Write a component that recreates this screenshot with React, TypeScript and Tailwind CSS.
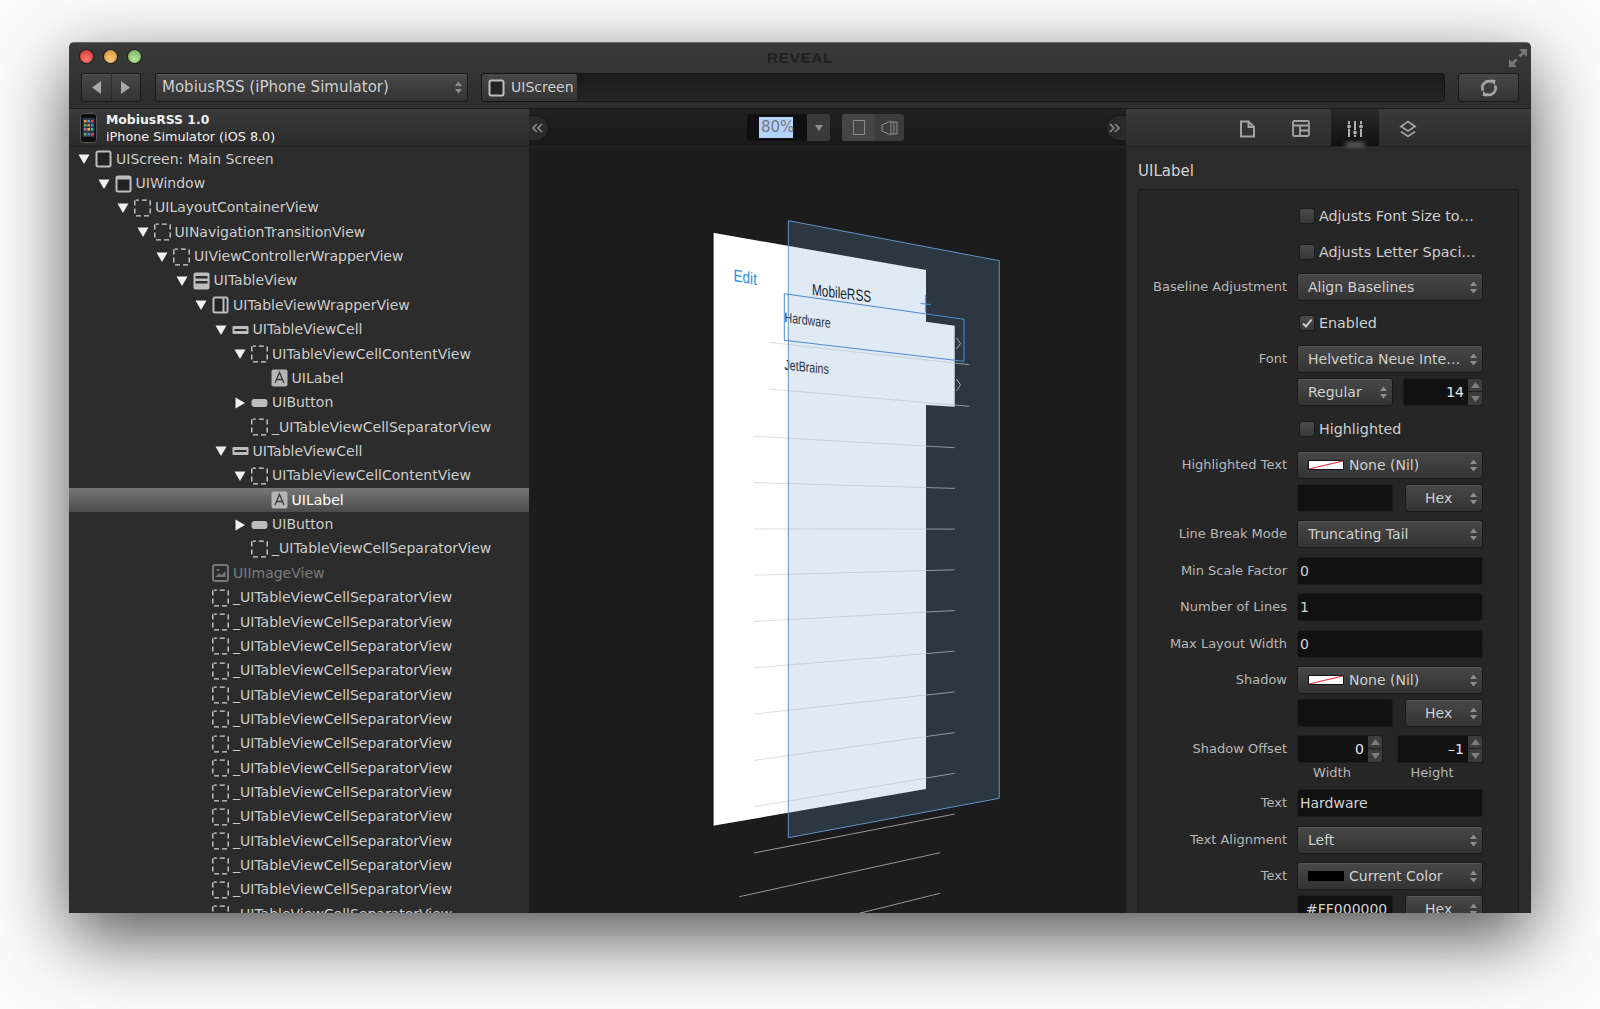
import type { ReactNode } from "react";

const FONT = "font-['DejaVu_Sans','Liberation_Sans',sans-serif]";

type IconKind = "screen" | "window" | "dashed" | "table" | "wrapper" | "cell" | "label" | "button" | "image";

type TreeRow = {
  name: string;
  level: number;
  icon: IconKind;
  arrow?: "open" | "closed";
  selected?: boolean;
  dim?: boolean;
};

const separators: TreeRow[] = Array.from({ length: 14 }, () => ({
  name: "_UITableViewCellSeparatorView",
  level: 6,
  icon: "dashed",
}));

const tree: TreeRow[] = [
  { name: "UIScreen: Main Screen", level: 0, icon: "screen", arrow: "open" },
  { name: "UIWindow", level: 1, icon: "window", arrow: "open" },
  { name: "UILayoutContainerView", level: 2, icon: "dashed", arrow: "open" },
  { name: "UINavigationTransitionView", level: 3, icon: "dashed", arrow: "open" },
  { name: "UIViewControllerWrapperView", level: 4, icon: "dashed", arrow: "open" },
  { name: "UITableView", level: 5, icon: "table", arrow: "open" },
  { name: "UITableViewWrapperView", level: 6, icon: "wrapper", arrow: "open" },
  { name: "UITableViewCell", level: 7, icon: "cell", arrow: "open" },
  { name: "UITableViewCellContentView", level: 8, icon: "dashed", arrow: "open" },
  { name: "UILabel", level: 9, icon: "label" },
  { name: "UIButton", level: 8, icon: "button", arrow: "closed" },
  { name: "_UITableViewCellSeparatorView", level: 8, icon: "dashed" },
  { name: "UITableViewCell", level: 7, icon: "cell", arrow: "open" },
  { name: "UITableViewCellContentView", level: 8, icon: "dashed", arrow: "open" },
  { name: "UILabel", level: 9, icon: "label", selected: true },
  { name: "UIButton", level: 8, icon: "button", arrow: "closed" },
  { name: "_UITableViewCellSeparatorView", level: 8, icon: "dashed" },
  { name: "UIImageView", level: 6, icon: "image", dim: true },
  ...separators,
];

function TreeIcon({ kind, dim }: { kind: IconKind; dim?: boolean }) {
  const c = dim ? "#777" : "#bdbdbd";
  return (
    <svg width="17" height="18" viewBox="0 0 17 18" className="shrink-0">
      {kind === "screen" && <rect x="1.5" y="1.5" width="14" height="15" rx="1.5" fill="#222" stroke={c} strokeWidth="2" />}
      {kind === "window" && (
        <>
          <rect x="1.5" y="1.5" width="14" height="15" rx="1.5" fill="#222" stroke={c} strokeWidth="2" />
          <rect x="1.5" y="1.5" width="14" height="3" fill={c} />
        </>
      )}
      {kind === "dashed" && <rect x="0.8" y="1.2" width="15.4" height="15.6" rx="1" fill="none" stroke="#d6d6d6" strokeWidth="1.3" strokeDasharray="5 3" strokeDashoffset="2" />}
      {kind === "table" && (
        <>
          <rect x="0.5" y="0.5" width="16" height="17" rx="2" fill={c} />
          <rect x="2.5" y="4" width="12" height="2.5" fill="#2a2a2a" />
          <rect x="2.5" y="9" width="12" height="2.5" fill="#2a2a2a" />
        </>
      )}
      {kind === "wrapper" && (
        <>
          <rect x="1.5" y="1.5" width="14" height="15" rx="1.5" fill="#222" stroke={c} strokeWidth="2" />
          <rect x="10.5" y="2" width="2" height="14" fill={c} />
        </>
      )}
      {kind === "cell" && (
        <>
          <rect x="0.5" y="5" width="16" height="8" rx="1" fill={c} />
          <rect x="2.5" y="8" width="12" height="2" fill="#2a2a2a" />
        </>
      )}
      {kind === "label" && (
        <>
          <rect x="0.5" y="0.5" width="16" height="17" rx="2" fill="#b5b5b5" />
          <path d="M4 14 L8.5 3.5 L13 14 M5.5 10.5 H11.5" fill="none" stroke="#3a3a3a" strokeWidth="1.3" />
        </>
      )}
      {kind === "button" && <rect x="0.5" y="5" width="16" height="8" rx="3" fill={c} />}
      {kind === "image" && (
        <>
          <rect x="1" y="1" width="15" height="16" rx="2" fill="none" stroke={c} strokeWidth="2" />
          <path d="M3.5 13 L7 9 L9.5 11 L13.5 7 V13 Z" fill={c} />
          <circle cx="6" cy="6" r="1.3" fill={c} />
        </>
      )}
    </svg>
  );
}

function Arrow({ dir }: { dir: "open" | "closed" }) {
  return (
    <svg width="12" height="12" viewBox="0 0 12 12" className="shrink-0">
      {dir === "open" ? <path d="M0.5 1.5 H11.5 L6 11 Z" fill="#f0f0f0" /> : <path d="M1.5 0.5 L11 6 L1.5 11.5 Z" fill="#f0f0f0" />}
    </svg>
  );
}

function Row({ row }: { row: TreeRow }) {
  return (
    <div
      className={`h-[24.37px] shrink-0 flex items-center whitespace-nowrap text-[14px] ${
        row.selected
          ? "bg-gradient-to-b from-[#767676] to-[#4c4c4c] text-white"
          : row.dim
            ? "text-[#7d7d7d]"
            : "text-[#cdcdcd]"
      }`}
      style={{ paddingLeft: 9 + row.level * 19.5 }}
    >
      <span className="w-[17px] shrink-0 flex items-center">{row.arrow && <Arrow dir={row.arrow} />}</span>
      <TreeIcon kind={row.icon} dim={row.dim} />
      <span className="ml-[4px]">{row.name}</span>
    </div>
  );
}

function UpDown({ className = "" }: { className?: string }) {
  return (
    <svg width="7" height="13" viewBox="0 0 7 13" className={`shrink-0 ${className}`}>
      <path d="M3.5 0.5 L7 5 H0 Z M3.5 12.5 L0 8 H7 Z" fill="#8e8e8e" />
    </svg>
  );
}

function Select({ children, className = "w-[186px]" }: { children: ReactNode; className?: string }) {
  return (
    <div
      className={`h-[28px] pl-[10px] pr-[5px] flex items-center justify-between rounded-[3px] border border-[#1a1a1a] bg-gradient-to-b from-[#484848] to-[#333333] shadow-[inset_0_1px_0_rgba(255,255,255,0.09)] text-[14px] text-[#cfcfcf] whitespace-nowrap ${className}`}
    >
      <span className="flex items-center">{children}</span>
      <UpDown />
    </div>
  );
}

function Field({ children, className = "w-[186px]" }: { children?: ReactNode; className?: string }) {
  return (
    <div className={`h-[28px] px-[2px] pt-[1px] flex items-center rounded-[3px] border border-[#1d1d1d] bg-[#111111] text-[14px] text-[#d4d4d4] whitespace-nowrap ${className}`}>
      {children}
    </div>
  );
}

function Stepper({ value, className }: { value: string; className: string }) {
  return (
    <div className={`h-[28px] flex rounded-[3px] border border-[#1d1d1d] bg-[#111111] overflow-hidden ${className}`}>
      <div className="flex-1 flex items-center justify-end pr-[4px] text-[14px] text-[#e8e8e8]">{value}</div>
      <div className="w-[14px] flex flex-col bg-[#3c3c3c]">
        <div className="h-[13px] flex items-center justify-center border-b border-[#222]">
          <svg width="9" height="6" viewBox="0 0 9 6"><path d="M4.5 0 L9 6 H0 Z" fill="#7d7d7d" /></svg>
        </div>
        <div className="flex-1 flex items-center justify-center">
          <svg width="9" height="6" viewBox="0 0 9 6"><path d="M4.5 6 L0 0 H9 Z" fill="#7d7d7d" /></svg>
        </div>
      </div>
    </div>
  );
}

function Swatch({ nil }: { nil?: boolean }) {
  return nil ? (
    <svg width="36" height="10" viewBox="0 0 36 10" className="mr-[5px]">
      <rect x="0.5" y="0.5" width="35" height="9" fill="#fff" stroke="#111" />
      <path d="M1 9 L35 1" stroke="#ee2222" strokeWidth="1" />
    </svg>
  ) : (
    <span className="w-[36px] h-[10px] mr-[5px] bg-black" />
  );
}

function Prop({ label, children, className }: { label?: string; children: ReactNode; className: string }) {
  return (
    <div className={`flex items-center h-[28px] shrink-0 ${className}`}>
      <div className="w-[148px] text-right text-[13px] text-[#b8b8b8] whitespace-nowrap">{label}</div>
      <div className="ml-[10px] flex items-center">{children}</div>
    </div>
  );
}

function Check({ label, checked, className }: { label: string; checked?: boolean; className: string }) {
  return (
    <Prop className={className}>
      <span className="ml-[2px] w-[16px] h-[16px] flex items-center justify-center rounded-[3px] border border-[#1c1c1c] bg-gradient-to-b from-[#4a4a4a] to-[#383838]">
        {checked && (
          <svg width="12" height="12" viewBox="0 0 12 12"><path d="M2 6.5 L5 9.5 L10.5 2.5" fill="none" stroke="#cfcfcf" strokeWidth="2" /></svg>
        )}
      </span>
      <span className="ml-[4px] pt-[2px] text-[14.3px] text-[#cfcfcf] whitespace-nowrap">{label}</span>
    </Prop>
  );
}

function CollapseTab({ side }: { side: "left" | "right" }) {
  return (
    <div
      className={`w-[20px] h-[26px] flex items-center bg-[#2a2a2a] border border-[#161616] ${
        side === "left" ? "rounded-r-[13px] border-l-0 pl-[3px]" : "rounded-l-[13px] border-r-0 pl-[2px]"
      }`}
    >
      <svg width="11" height="10" viewBox="0 0 11 10">
        <path
          d={side === "left" ? "M5 1 L1 5 L5 9 M10 1 L6 5 L10 9" : "M1 1 L5 5 L1 9 M6 1 L10 5 L6 9"}
          fill="none"
          stroke="#8a8a8a"
          strokeWidth="1.6"
        />
      </svg>
    </div>
  );
}

// exploded view of the table view layers
function Layers() {
  const rules = Array.from({ length: 10 }, (_, n) => ({
    x1: 754,
    y1: 436.3 + 46.3 * n,
    x2: 954.7,
    y2: 447.7 + 40.7 * n,
  }));
  return (
    <svg viewBox="529 147 596 767" width="596" height="767" className="block">
      <polygon points="713,232.7 926,270 926,789 713,825.7" fill="#ffffff" />
      <line x1="713" y1="232.7" x2="713" y2="825.7" stroke="#000" strokeWidth="1" />
      <polygon points="926,321.7 954.7,325.7 954.7,406.7 926,405" fill="#ffffff" />
      <line x1="769" y1="342.3" x2="969.3" y2="364.7" stroke="#cfcfcf" strokeWidth="0.7" />
      <line x1="769" y1="389" x2="969.3" y2="406.3" stroke="#cfcfcf" strokeWidth="0.7" />
      {rules.map((r) => (
        <line key={r.y1} {...r} stroke="#cfcfcf" strokeWidth="0.7" />
      ))}
      <line x1="739.3" y1="896.7" x2="940" y2="852.7" stroke="#b5b5b5" strokeWidth="0.8" />
      <line x1="739.3" y1="943" x2="940" y2="893.3" stroke="#b5b5b5" strokeWidth="0.8" />
      <g fontFamily="'Liberation Sans', sans-serif">
        <text transform="matrix(0.8 0.14 0 1 733.5 281)" fontSize="17" fill="#2b8cf0">Edit</text>
        <text transform="matrix(0.74 0.09 0 1 812 295)" fontSize="16" fontWeight="500" fill="#000">MobileRSS</text>
        <text transform="matrix(0.76 0.1 0 1 784.5 322)" fontSize="14" fill="#111">Hardware</text>
        <text transform="matrix(0.76 0.08 0 1 784.5 369.5)" fontSize="14" fill="#111">JetBrains</text>
      </g>
      <path d="M956.5 338 L960.5 343.5 L956.5 349 M956.5 379 L960.5 385 L956.5 390.7" fill="none" stroke="#b0b0b0" strokeWidth="1" />
      <polygon points="788.3,220.7 999.3,260.7 999.3,798.3 788.3,837.7" fill="rgb(106,157,208)" fillOpacity="0.216" stroke="#5e93cc" strokeWidth="1" />
      <polygon points="784.3,293.7 964,319.3 964,361.3 784.3,340.3" fill="none" stroke="#4a8ad8" strokeWidth="1" />
      <path d="M925.7 295 V312 M920.5 303.5 L931 304.5" stroke="#3f8fe8" strokeWidth="1" fill="none" />
    </svg>
  );
}

function Tab({ active, children }: { active?: boolean; children: ReactNode }) {
  return (
    <div
      className={`relative w-[48px] h-full pt-[2px] flex items-center justify-center ${
        active ? "bg-gradient-to-b from-[#2a2a2a] to-[#111111]" : ""
      }`}
    >
      {children}
      {active && <span className="absolute bottom-0 left-[14px] w-[20px] h-[3px] rounded-t-full bg-[#8a8a8a] blur-[2px]" />}
    </div>
  );
}

export default function App() {
  return (
    <div className={`w-[1600px] h-[1009px] bg-[#fbfbfb] px-[69px] pt-[42px] overflow-hidden ${FONT}`}>
      <div className="w-[1462px] h-[871px] flex flex-col rounded-t-[5px] overflow-hidden shadow-[0_24px_72px_rgba(0,0,0,0.68)]">
        {/* Title bar and toolbar */}
        <div className="relative h-[67px] shrink-0 bg-gradient-to-b from-[#3a3a3a] to-[#2d2d2d] border-t border-[#6a6a6a] border-b border-b-[#1c1c1c]">
          <div className="h-[27px] flex items-center pl-[11px] gap-[11px]">
            <span className="w-[13px] h-[13px] rounded-full bg-[radial-gradient(circle_at_50%_70%,#ff7a72,#c8302a)] shadow-[0_0_0_1px_#222]" />
            <span className="w-[13px] h-[13px] rounded-full bg-[radial-gradient(circle_at_50%_70%,#f9cb7c,#cf8a2b)] shadow-[0_0_0_1px_#222]" />
            <span className="w-[13px] h-[13px] rounded-full bg-[radial-gradient(circle_at_50%_70%,#b9e69a,#6fa850)] shadow-[0_0_0_1px_#222]" />
          </div>
          <div className="absolute left-0 right-0 top-[3px] text-center text-[15.5px] font-bold tracking-[0.5px] text-[#212121] font-['Liberation_Sans',sans-serif]">REVEAL</div>
          <svg width="20" height="20" viewBox="0 0 20 20" className="absolute right-[3px] top-[5px]">
            <path d="M11 1 H19 V9 L16 6 L12.5 9.5 L10.5 7.5 L14 4 Z M9 19 H1 V11 L4 14 L7.5 10.5 L9.5 12.5 L6 16 Z" fill="#777" />
          </svg>
          <div className="flex items-center px-[12px] mt-[3px]">
            <div className="w-[60px] h-[29px] flex rounded-[3px] border border-[#1a1a1a] bg-gradient-to-b from-[#484848] to-[#333333] shadow-[inset_0_1px_0_rgba(255,255,255,0.08)]">
              <div className="flex-1 flex items-center justify-center border-r border-[#2c2c2c]">
                <svg width="9" height="13" viewBox="0 0 9 13"><path d="M9 0 V13 L0 6.5 Z" fill="#a8a8a8" /></svg>
              </div>
              <div className="flex-1 flex items-center justify-center">
                <svg width="9" height="13" viewBox="0 0 9 13"><path d="M0 0 V13 L9 6.5 Z" fill="#a8a8a8" /></svg>
              </div>
            </div>
            <Select className="ml-[14px] w-[313px] !h-[29px] !pl-[6px]">
              <span className="text-[15px]">MobiusRSS (iPhone Simulator)</span>
            </Select>
            <div className="ml-[13px] w-[964px] h-[29px] flex rounded-[3px] border border-[#151515] bg-gradient-to-b from-[#1a1a1a] to-[#262626]">
              <div className="w-[95px] flex items-center pl-[6px] rounded-[3px] bg-gradient-to-b from-[#484848] to-[#333333]">
                <TreeIcon kind="screen" />
                <span className="ml-[6px] text-[14px] text-[#cfcfcf]">UIScreen</span>
              </div>
            </div>
            <div className="ml-[13px] w-[61px] h-[29px] flex items-center justify-center rounded-[3px] border border-[#1a1a1a] bg-gradient-to-b from-[#484848] to-[#333333]">
              <svg width="18" height="18" viewBox="0 0 18 18" fill="none" stroke="#a6a6a6" strokeWidth="2.6">
                <path d="M3 11.5 A6.5 6.5 0 0 1 12 3" />
                <path d="M15 6.5 A6.5 6.5 0 0 1 6 15" />
                <path d="M10.5 0.5 L15.5 1 L14.5 6.5 Z" fill="#a6a6a6" stroke="none" />
                <path d="M7.5 17.5 L2.5 17 L3.5 11.5 Z" fill="#a6a6a6" stroke="none" />
              </svg>
            </div>
          </div>
        </div>

        <div className="flex-1 min-h-0 flex">
          {/* Outline */}
          <div className="w-[460px] shrink-0 flex flex-col bg-[#2c2c2c] overflow-hidden">
            <div className="h-[38px] shrink-0 flex items-center pl-[11px] bg-gradient-to-b from-[#3a3a3a] to-[#2b2b2b] border-b border-[#222]">
              <svg width="17" height="30" viewBox="0 0 17 30" className="shrink-0">
                <rect x="0.5" y="0.5" width="16" height="29" rx="3" fill="#0c0c0c" stroke="#555" />
                <rect x="2.5" y="5" width="12" height="19" fill="#303848" />
                <g>
                  <rect x="4" y="7" width="2.5" height="2.5" fill="#e0a040" />
                  <rect x="7.5" y="7" width="2.5" height="2.5" fill="#50a0d0" />
                  <rect x="11" y="7" width="2.5" height="2.5" fill="#d05050" />
                  <rect x="4" y="11" width="2.5" height="2.5" fill="#60b060" />
                  <rect x="7.5" y="11" width="2.5" height="2.5" fill="#d08040" />
                  <rect x="11" y="11" width="2.5" height="2.5" fill="#5080d0" />
                  <rect x="4" y="15" width="2.5" height="2.5" fill="#c060a0" />
                  <rect x="7.5" y="15" width="2.5" height="2.5" fill="#e0c040" />
                  <rect x="11" y="15" width="2.5" height="2.5" fill="#50b0a0" />
                  <rect x="4" y="20" width="2.5" height="2.5" fill="#60b060" />
                  <rect x="7.5" y="20" width="2.5" height="2.5" fill="#5080d0" />
                  <rect x="11" y="20" width="2.5" height="2.5" fill="#d05050" />
                </g>
              </svg>
              <div className="ml-[9px] leading-[17px] text-[#f0f0f0]">
                <div className="text-[12.4px] font-bold">MobiusRSS 1.0</div>
                <div className="text-[12.8px]">iPhone Simulator (iOS 8.0)</div>
              </div>
            </div>
            <div className="flex-1 min-h-0 flex flex-col overflow-hidden">
              {tree.map((row, i) => (
                <Row key={i} row={row} />
              ))}
            </div>
          </div>

          {/* Canvas */}
          <div className="flex-1 min-w-0 flex flex-col bg-[#1c1c1c] overflow-hidden">
            <div className="h-[38px] shrink-0 flex items-center justify-between bg-gradient-to-b from-[#212121] to-[#191919] border-b border-[#262626]">
              <CollapseTab side="left" />
              <div className="flex items-center mr-[4px]">
                <div className="w-[60px] h-[27px] flex items-center pl-[12px] rounded-l-[3px] bg-[#101010]">
                  <span className="px-[2px] h-[21px] w-[34px] flex items-center bg-[#b3d4fd] text-[15px] text-[#777]">80%</span>
                </div>
                <div className="w-[23px] h-[27px] flex items-center justify-center rounded-r-[3px] bg-[#3a3a3a]">
                  <svg width="8" height="6" viewBox="0 0 8 6"><path d="M0 0 H8 L4 6 Z" fill="#8e8e8e" /></svg>
                </div>
                <div className="ml-[12px] w-[62px] h-[27px] flex rounded-[3px] overflow-hidden bg-[#3c3c3c]">
                  <div className="w-[33px] flex items-center justify-center bg-[#454545]">
                    <span className="w-[12px] h-[15px] border border-[#8a8a8a]" />
                  </div>
                  <div className="flex-1 flex items-center justify-center">
                    <svg width="18" height="18" viewBox="0 0 18 18" fill="none" stroke="#8e8e8e" strokeWidth="1">
                      <path d="M1 6 L10 2 V16 L1 12 Z M10 3 H16 V15 H10 M13 3 V15" />
                    </svg>
                  </div>
                </div>
              </div>
              <CollapseTab side="right" />
            </div>
            <div className="flex-1 min-h-0 overflow-hidden">
              <Layers />
            </div>
          </div>

          {/* Inspector */}
          <div className="w-[405px] shrink-0 flex flex-col bg-[#2b2b2b] overflow-hidden">
            <div className="h-[38px] shrink-0 flex justify-center gap-[5px] bg-gradient-to-b from-[#3a3a3a] to-[#2c2c2c] border-b border-[#222]">
              <Tab>
                <svg width="17" height="18" viewBox="0 0 17 18" fill="none" stroke="#a2a2a2" strokeWidth="2" className="mr-[4px]">
                  <path d="M2 1.5 H9.5 L15 7 V16.5 H2 Z M9.5 1.5 V7 H15" />
                </svg>
              </Tab>
              <Tab>
                <svg width="18" height="17" viewBox="0 0 18 17" fill="none" stroke="#a2a2a2" strokeWidth="1.8" className="mr-[3px]">
                  <rect x="1" y="1" width="16" height="15" rx="1.5" />
                  <path d="M1 5.5 H17 M8 5.5 V16 M8 10.5 H17" />
                </svg>
              </Tab>
              <Tab active>
                <svg width="18" height="18" viewBox="0 0 18 18" stroke="#b0b0b0" strokeWidth="2" fill="#b0b0b0">
                  <path d="M3 1 V4 M3 9 V17 M9 1 V10 M9 15 V17 M15 1 V4 M15 9 V17" fill="none" />
                  <circle cx="3" cy="6.5" r="1.5" strokeWidth="1" />
                  <circle cx="9" cy="12.5" r="1.5" strokeWidth="1" />
                  <circle cx="15" cy="6.5" r="1.5" strokeWidth="1" />
                </svg>
              </Tab>
              <Tab>
                <svg width="18" height="18" viewBox="0 0 18 18" fill="none" stroke="#a2a2a2" strokeWidth="1.8">
                  <path d="M9 1.5 L16 6.5 L9 11 L2 6.5 Z M2 11.5 L9 16.5 L16 11.5" />
                </svg>
              </Tab>
            </div>
            <div className="pl-[12px] pt-[14px] h-[42px] shrink-0 text-[15px] leading-[20px] text-[#d2d2d2]">UILabel</div>
            <div className="ml-[12px] mr-[12px] flex-1 min-h-0 flex flex-col overflow-hidden rounded-t-[3px] border border-b-0 border-[#1b1b1b] bg-[#262626]">
              <Check label="Adjusts Font Size to…" className="mt-[12px]" />
              <Check label="Adjusts Letter Spaci…" className="mt-[8px]" />
              <Prop label="Baseline Adjustment" className="mt-[7px]"><Select>Align Baselines</Select></Prop>
              <Check label="Enabled" checked className="mt-[8px]" />
              <Prop label="Font" className="mt-[8px]"><Select>Helvetica Neue Inte…</Select></Prop>
              <Prop className="mt-[5px]">
                <Select className="w-[96px]">Regular</Select>
                <Stepper value="14" className="ml-[10px] w-[80px]" />
              </Prop>
              <Check label="Highlighted" className="mt-[9px]" />
              <Prop label="Highlighted Text" className="mt-[8px]"><Select><Swatch nil />None (Nil)</Select></Prop>
              <Prop className="mt-[5px]">
                <Field className="w-[96px]" />
                <Select className="ml-[12px] w-[78px] !pl-[19px]">Hex</Select>
              </Prop>
              <Prop label="Line Break Mode" className="mt-[8px]"><Select>Truncating Tail</Select></Prop>
              <Prop label="Min Scale Factor" className="mt-[9px]"><Field>0</Field></Prop>
              <Prop label="Number of Lines" className="mt-[8px]"><Field>1</Field></Prop>
              <Prop label="Max Layout Width" className="mt-[9px]"><Field>0</Field></Prop>
              <Prop label="Shadow" className="mt-[8px]"><Select><Swatch nil />None (Nil)</Select></Prop>
              <Prop className="mt-[5px]">
                <Field className="w-[96px]" />
                <Select className="ml-[12px] w-[78px] !pl-[19px]">Hex</Select>
              </Prop>
              <Prop label="Shadow Offset" className="mt-[8px]">
                <Stepper value="0" className="w-[86px]" />
                <Stepper value="–1" className="ml-[14px] w-[86px]" />
              </Prop>
              <div className="h-[20px] shrink-0 ml-[158px] flex text-[13px] leading-[20px] text-[#b8b8b8]">
                <span className="w-[86px] text-center pr-[16px]">Width</span>
                <span className="ml-[14px] w-[86px] text-center pr-[16px]">Height</span>
              </div>
              <Prop label="Text" className="mt-[6px]"><Field>Hardware</Field></Prop>
              <Prop label="Text Alignment" className="mt-[9px]"><Select>Left</Select></Prop>
              <Prop label="Text" className="mt-[8px]"><Select><Swatch />Current Color</Select></Prop>
              <Prop className="mt-[5px]">
                <Field className="w-[96px] !pl-[8px]">#FF000000</Field>
                <Select className="ml-[12px] w-[78px] !pl-[19px]">Hex</Select>
              </Prop>
            </div>
          </div>
        </div>
      </div>
    </div>
  );
}
